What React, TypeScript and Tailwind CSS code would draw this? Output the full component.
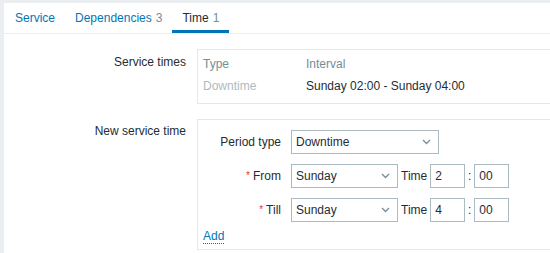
import React from 'react';

const font = { fontFamily: '"Liberation Sans", Arial, sans-serif' };

const Chevron: React.FC = () => (
  <svg width="9" height="6" viewBox="0 0 9 6" className="shrink-0">
    <polyline points="1,1 4.5,4.5 8,1" fill="none" stroke="#768d99" strokeWidth="1.3" />
  </svg>
);

const Select: React.FC<{ value: string; width: string }> = ({ value, width }) => (
  <div className={`${width} h-[24px] border border-[#acbbc2] flex items-center justify-between pl-[4px] pr-[7px] text-[#1f2c33]`}>
    <span>{value}</span>
    <Chevron />
  </div>
);

const Input: React.FC<{ value: string }> = ({ value }) => (
  <div className="w-[35px] h-[24px] border border-[#acbbc2] flex items-center pl-[4px] text-[#1f2c33]">{value}</div>
);

const TimeRow: React.FC<{ label: string; hour: string }> = ({ label, hour }) => (
  <div className="flex items-center h-[24px]">
    <div className="w-[84px] text-right pr-[1px] text-[#1f2c33]">
      <span className="text-[#e33734] text-[10px] align-top mr-[3px]">*</span>
      {label}
    </div>
    <div className="ml-[9px] flex items-center">
      <Select value="Sunday" width="w-[107px]" />
      <span className="ml-[3px] text-[#1f2c33]">Time</span>
      <div className="ml-[3px]">
        <Input value={hour} />
      </div>
      <span className="w-[9px] text-center text-[#1f2c33]">:</span>
      <Input value="00" />
    </div>
  </div>
);

export default function App() {
  return (
    <div className="h-[253px] bg-[#ebeef0] pt-[3px] pl-[4px] overflow-hidden text-[12px] leading-[14px]" style={font}>
      <div className="bg-white h-full">
        <div className="flex h-[31px] border-b border-[#ebeef0] pl-[1px]">
          <div className="px-[10px] flex items-center text-[#0275b8]">Service</div>
          <div className="px-[10px] flex items-center text-[#0275b8]">
            Dependencies<span className="ml-[4px] text-[#768d99]">3</span>
          </div>
          <div className="px-[10px] flex items-center text-[#1f2c33] border-b-[3px] border-[#0275b8] pt-[3px]">
            Time<span className="ml-[4px] text-[#768d99]">1</span>
          </div>
        </div>

        <div className="flex mt-[15px]">
          <div className="w-[182px] text-right pt-[6px] text-[#1f2c33]">Service times</div>
          <div className="ml-[11px] flex-1 h-[55px] border border-r-0 border-[#e4e8ea] pt-[7px] pl-[5px]">
            <div className="flex text-[#768d99]">
              <div className="w-[103px]">Type</div>
              <div>Interval</div>
            </div>
            <div className="flex mt-[8px]">
              <div className="w-[103px] text-[#acbbc2]">Downtime</div>
              <div className="text-[#1f2c33]">Sunday 02:00 - Sunday 04:00</div>
            </div>
          </div>
        </div>

        <div className="flex mt-[15px]">
          <div className="w-[182px] text-right pt-[5px] text-[#1f2c33]">New service time</div>
          <div className="ml-[11px] flex-1 h-[131px] border border-r-0 border-[#e4e8ea] pt-[10px]">
            <div className="flex flex-col gap-[10px]">
              <div className="flex items-center h-[24px]">
                <div className="w-[84px] text-right pr-[1px] text-[#1f2c33]">Period type</div>
                <div className="ml-[9px]">
                  <Select value="Downtime" width="w-[148px]" />
                </div>
              </div>
              <TimeRow label="From" hour="2" />
              <TimeRow label="Till" hour="4" />
            </div>
            <div className="pl-[5px] mt-[7px]">
              <span className="inline-block text-[#0275b8] border-b border-dotted border-[#0275b8] leading-[14px]">Add</span>
            </div>
          </div>
        </div>
      </div>
    </div>
  );
}
